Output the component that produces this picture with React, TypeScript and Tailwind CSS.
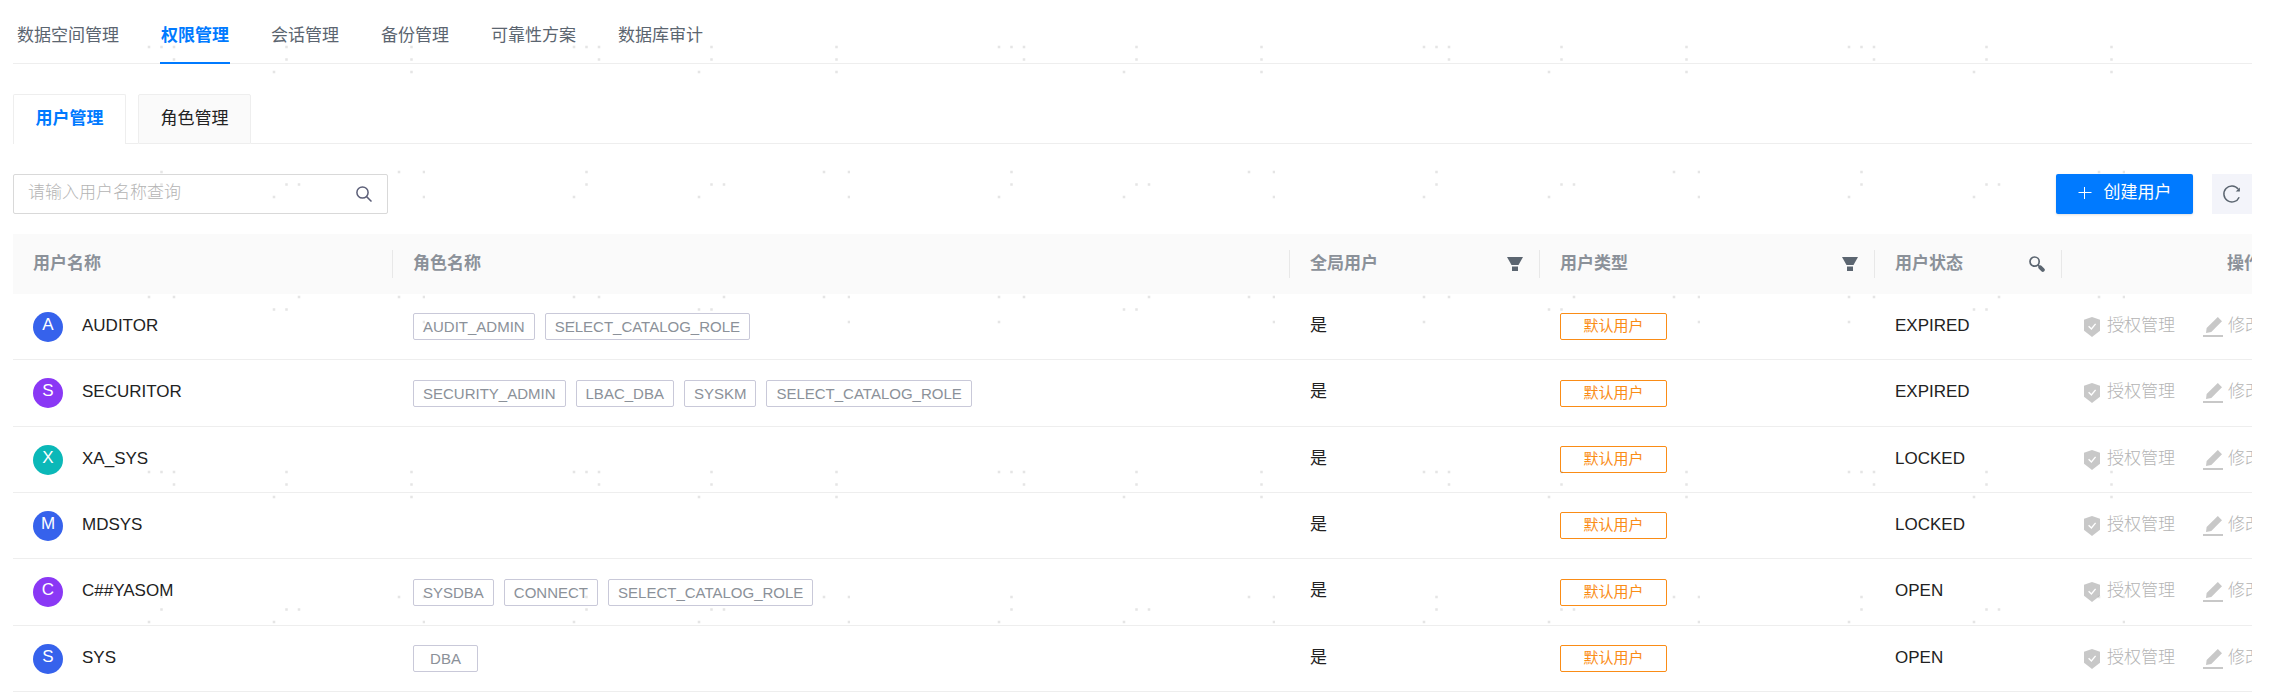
import { ReactNode } from "react";

const navTabs = ["数据空间管理", "权限管理", "会话管理", "备份管理", "可靠性方案", "数据库审计"];

interface User {
  name: string;
  color: string;
  roles: string[];
  status: string;
}

const users: User[] = [
  { name: "AUDITOR", color: "bg-[#3662ec]", roles: ["AUDIT_ADMIN", "SELECT_CATALOG_ROLE"], status: "EXPIRED" },
  {
    name: "SECURITOR",
    color: "bg-[#8a38f5]",
    roles: ["SECURITY_ADMIN", "LBAC_DBA", "SYSKM", "SELECT_CATALOG_ROLE"],
    status: "EXPIRED",
  },
  { name: "XA_SYS", color: "bg-[#0bb8b8]", roles: [], status: "LOCKED" },
  { name: "MDSYS", color: "bg-[#3662ec]", roles: [], status: "LOCKED" },
  { name: "C##YASOM", color: "bg-[#8a38f5]", roles: ["SYSDBA", "CONNECT", "SELECT_CATALOG_ROLE"], status: "OPEN" },
  { name: "SYS", color: "bg-[#3662ec]", roles: ["DBA"], status: "OPEN" },
];

/* dot centres inside one 425 × 425 watermark tile */
const dots = [
  [149, 47], [161.5, 47], [174, 47], [286.5, 47], [411.5, 47],
  [174, 59.5], [286.5, 59.5], [411.5, 59.5],
  [274, 72], [411.5, 72],
  [161.5, 172], [399, 172], [424, 172],
  [161.5, 184.5], [286.5, 184.5], [299, 184.5],
  [149, 197], [274, 197], [424, 197],
  [149, 297], [174, 297], [299, 297], [399, 297], [424, 297],
  [274, 309.5], [286.5, 309.5],
  [149, 322], [424, 322],
];

const Watermark = () => (
  <svg className="absolute inset-0 h-full w-full pointer-events-none" aria-hidden="true">
    <defs>
      <pattern id="dots" width="425" height="425" patternUnits="userSpaceOnUse">
        {dots.map(([x, y]) => (
          <rect key={`${x}-${y}`} x={x - 1.25} y={y - 1.25} width="2.5" height="2.5" fill="#000" fillOpacity="0.1" />
        ))}
      </pattern>
    </defs>
    <rect width="100%" height="100%" fill="url(#dots)" />
  </svg>
);

const FilterIcon = () => (
  <svg className="w-4 h-4" viewBox="0 0 16 16" fill="#5b6570">
    <path d="M0 1h16l-4.5 8h-7z" />
    <path d="M5 10.5h6V15H5z" />
  </svg>
);

const BoldSearchIcon = () => (
  <svg className="w-4 h-4" viewBox="0 0 16 16" fill="none" stroke="#5b6570">
    <circle cx="5.6" cy="5.6" r="4.6" strokeWidth="1.7" />
    <path d="M9 9l1.5 1.5" strokeWidth="1.7" />
    <path d="M11.3 11.3l2.5 2.5" strokeWidth="4" strokeLinecap="round" />
  </svg>
);

const SearchIcon = () => (
  <svg className="w-4 h-4" viewBox="0 0 16 16" fill="none" stroke="#5c5f78" strokeWidth="1.5">
    <circle cx="6.5" cy="6.5" r="5.6" />
    <path d="M10.6 10.6l4.9 4.9" />
  </svg>
);

const PlusIcon = () => (
  <svg className="w-3.5 h-3.5" viewBox="0 0 14 14" stroke="#fff" strokeWidth="1">
    <path d="M0.5 5.5h13M6.5 0v12" />
  </svg>
);

const RefreshIcon = () => (
  <svg className="w-5 h-5" viewBox="0 0 20 20" fill="none" stroke="#5b6570" strokeWidth="1.5">
    <path d="M17.2 13.2A8 8 0 1 1 16.2 5" />
    <path d="M17.9 3.4v4h-4.2z" fill="#5b6570" stroke="none" />
  </svg>
);

const ShieldIcon = () => (
  <svg className="w-4 h-5" viewBox="0 0 16 20">
    <path d="M8 0l8 2.8v11L8 20l-8-6.2v-11z" fill="#c8c8c8" />
    <path d="M4.6 9.2l2.8 2.7 4.2-5" fill="none" stroke="#fff" strokeWidth="1.4" />
  </svg>
);

const PencilIcon = () => (
  <svg className="w-5 h-5" viewBox="0 0 20 20" fill="#c8c8c8">
    <path d="M14.8 0L19 4.2 8.3 15 3 16l.6-5z" />
    <path d="M0 18h20v2H0z" />
  </svg>
);

interface HeadCellProps {
  children: ReactNode;
  icon?: ReactNode;
  label?: string;
}

const HeadCell = ({ children, icon, label }: HeadCellProps) => (
  <th className="p-0 font-bold text-left">
    <div className="flex items-center justify-between h-7 pl-5 pr-4 border-r border-[#e8e8e8]">
      <span>{children}</span>
      {icon && (
        <button type="button" aria-label={label}>
          {icon}
        </button>
      )}
    </div>
  </th>
);

const UserRow = ({ user }: { user: User }) => (
  <tr className="h-[66px] nth-[3n+2]:h-[67px] *:border-b *:border-[#eeeeee]">
    <td className="px-5 py-0">
      <div className="flex items-center gap-[19px]">
        <span className={`flex justify-center w-[30px] h-[30px] rounded-full text-white leading-[26px] ${user.color}`}>
          {user.name[0]}
        </span>
        <span className="pb-0.5">{user.name}</span>
      </div>
    </td>
    <td className="px-5 py-0">
      <div className="flex gap-2.5">
        {user.roles.map((role) => (
          <span
            key={role}
            className="min-w-[65px] h-[27px] px-[9px] border border-[#c9c9d9] rounded-xs text-center text-[15px] leading-[26px] text-[#8b9199]"
          >
            {role}
          </span>
        ))}
      </div>
    </td>
    <td className="px-5 pt-0 pb-0.5">是</td>
    <td className="px-5 py-0">
      <div className="w-[107px] h-[27px] border border-[#fa8c16] rounded-xs text-center text-[15px] leading-[24px] text-[#fa8c16]">
        默认用户
      </div>
    </td>
    <td className="px-5 pt-0 pb-0.5">{user.status}</td>
    <td className="pl-[22px] pr-0 py-0">
      <div className="flex gap-7 font-light text-[#b4b4b4]">
        <button type="button" disabled className="flex items-center gap-[7px] whitespace-nowrap">
          <ShieldIcon />
          <span className="pb-0.5">授权管理</span>
        </button>
        <button type="button" disabled className="flex items-center gap-[5px] whitespace-nowrap">
          <PencilIcon />
          <span className="pb-0.5">修改</span>
        </button>
      </div>
    </td>
  </tr>
);

const App = () => (
  <div className="relative overflow-hidden bg-white pl-[13px] pr-[19px] font-['Liberation_Sans','Noto_Sans_CJK_SC',sans-serif] text-[17px] leading-[26px] text-[#222222]">
    <nav className="flex gap-10 h-16 pl-[3px] border-b border-[#eeeeee]">
      {navTabs.map((tab) => (
        <a
          key={tab}
          href="#"
          className={
            tab === "权限管理"
              ? "h-16 px-px pt-[23px] border-b-2 border-[#007aff] font-bold text-[#007aff]"
              : "h-16 px-px pt-[23px] text-[#5b6570]"
          }
        >
          {tab}
        </a>
      ))}
    </nav>

    <div className="flex mt-[30px] h-[50px]">
      <button
        type="button"
        className="w-[113px] pb-px border border-b-0 border-[#eeeeee] rounded-t-xs font-bold text-[#007aff]"
      >
        用户管理
      </button>
      <div className="w-3 border-b border-[#eeeeee]" />
      <button type="button" className="w-[113px] border border-[#eeeeee] rounded-t-xs bg-[#fafafa]">
        角色管理
      </button>
      <div className="flex-1 border-b border-[#eeeeee]" />
    </div>

    <div className="flex items-center justify-between mt-[30px] mb-5 h-10">
      <div className="flex items-center w-[375px] h-10 pl-3.5 pr-[15px] border border-[#d9d9d9] rounded-xs">
        <input
          type="text"
          aria-label="用户名称"
          placeholder="请输入用户名称查询"
          className="flex-1 min-w-0 pb-0.5 outline-none font-light placeholder:text-[#b4b4b4]"
        />
        <button type="button" aria-label="搜索">
          <SearchIcon />
        </button>
      </div>
      <div className="flex gap-[19px]">
        <button
          type="button"
          className="flex items-center justify-center gap-3 w-[137px] h-10 rounded-xs bg-[#007aff] text-white shadow-sm"
        >
          <PlusIcon />
          <span className="pb-0.5">创建用户</span>
        </button>
        <button type="button" aria-label="刷新" className="flex items-center justify-center w-10 h-10 bg-[#f3f4fa]">
          <RefreshIcon />
        </button>
      </div>
    </div>

    <div className="overflow-hidden">
      <table className="table-fixed w-full min-w-[2413px] border-separate border-spacing-0">
        <colgroup>
          <col className="w-[380px]" />
          <col />
          <col className="w-[250px]" />
          <col className="w-[335px]" />
          <col className="w-[187px]" />
          <col className="w-[364px]" />
        </colgroup>
        <thead>
          <tr className="h-[60px] bg-[#fafafa] text-[#8b9199]">
            <HeadCell>用户名称</HeadCell>
            <HeadCell>角色名称</HeadCell>
            <HeadCell icon={<FilterIcon />} label="筛选全局用户">
              全局用户
            </HeadCell>
            <HeadCell icon={<FilterIcon />} label="筛选用户类型">
              用户类型
            </HeadCell>
            <HeadCell icon={<BoldSearchIcon />} label="搜索用户状态">
              用户状态
            </HeadCell>
            <th className="p-0 font-bold text-center">操作</th>
          </tr>
        </thead>
        <tbody>
          {users.map((user) => (
            <UserRow key={user.name} user={user} />
          ))}
        </tbody>
      </table>
    </div>
    <Watermark />
  </div>
);

export default App;
